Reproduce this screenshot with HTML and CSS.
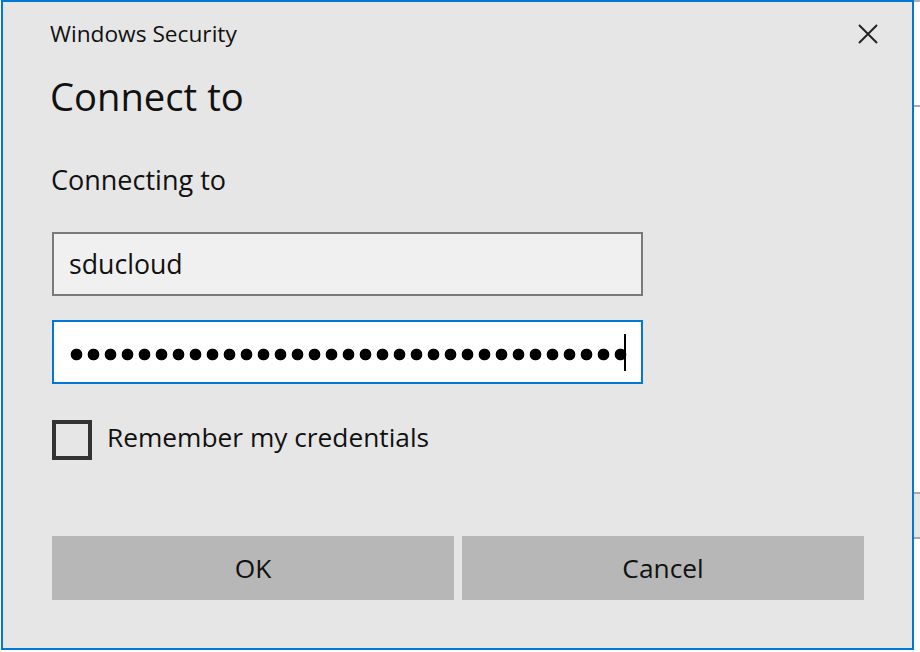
FILE: index.html
```html
<!DOCTYPE html>
<html lang="en">
<head>
<meta charset="utf-8">
<title>Windows Security</title>
<link rel="stylesheet" href="styles.css">
</head>
<body>
<div class="dialog">
  <div class="titlebar">
    <span class="title">Windows Security</span>
    <button class="close" aria-label="Close">
      <svg width="20" height="20" viewBox="0 0 20 20"><path d="M1 1L19 19M19 1L1 19" stroke="#222" stroke-width="2" fill="none"/></svg>
    </button>
  </div>
  <h1 class="heading">Connect to</h1>
  <p class="label">Connecting to</p>
  <div class="field">sducloud</div>
  <div class="field focused"><span class="dots" aria-label="password"></span><span class="caret"></span></div>
  <div class="check"><span class="box"></span><span class="check-text">Remember my credentials</span></div>
  <div class="buttons">
    <button class="btn">OK</button>
    <button class="btn">Cancel</button>
  </div>
</div>
</body>
</html>
```
FILE: styles.css
```css
html, body {
  margin: 0;
  padding: 0;
}
body {
  width: 920px;
  height: 652px;
  overflow: hidden;
  background:
    linear-gradient(#a9a9a9, #a9a9a9) 914px 105px / 6px 2px no-repeat,
    linear-gradient(#a9a9a9, #a9a9a9) 914px 492px / 6px 2px no-repeat,
    linear-gradient(#a9a9a9, #a9a9a9) 914px 537px / 6px 2px no-repeat,
    linear-gradient(#e6e6e6, #e6e6e6) 914px 494px / 6px 43px no-repeat,
    linear-gradient(#b0b0b0, #b0b0b0) 914px 0 / 6px 2px no-repeat,
    #ffffff;
  font-family: "Open Sans", "Noto Sans", sans-serif;
  color: #000;
}
.dialog {
  box-sizing: border-box;
  margin-left: 1px;
  width: 913px;
  height: 650px;
  border: 2px solid #0078d7;
  background: #e6e6e6;
  padding: 0 48px 48px 49px;
  display: flex;
  flex-direction: column;
}
.titlebar {
  margin-top: 12px;
  height: 40px;
  display: flex;
  align-items: center;
  justify-content: space-between;
}
.title {
  font-size: 22.7px;
  line-height: 40px;
  margin-left: -2px;
  color: #111;
}
.close {
  width: 40px;
  height: 40px;
  margin-right: -24px;
  padding: 0;
  border: 0;
  background: transparent;
  display: flex;
  align-items: center;
  justify-content: center;
}
.heading {
  margin: 18px 0 0 -2px;
  font-size: 38.2px;
  font-weight: 400;
  line-height: 48px;
  color: #111;
}
.label {
  margin: 42px 0 0 -1px;
  font-size: 27px;
  line-height: 36px;
  color: #111;
}
.field {
  box-sizing: border-box;
  margin-top: 34px;
  width: 591px;
  height: 64px;
  border: 2px solid #7a7a7a;
  background: #f0f0f0;
  padding-left: 15px;
  font-size: 26.7px;
  line-height: 58px;
  display: flex;
  align-items: center;
  color: #111;
}
.field.focused {
  margin-top: 24px;
  border-color: #0078d7;
  background: #ffffff;
  padding-left: 14px;
}
.dots {
  width: 561px;
  height: 17px;
  background: radial-gradient(circle at 8.5px 8.5px, #000 5.5px, transparent 6.2px) 0 0 / 17px 17px repeat-x;
  margin-top: 4px;
}
.caret {
  width: 2px;
  height: 37px;
  background: #000;
  margin-left: -5px;
}
.check {
  margin-top: 36px;
  height: 40px;
  display: flex;
  align-items: flex-start;
}
.box {
  box-sizing: border-box;
  width: 40px;
  height: 40px;
  border: 4px solid #333;
  flex: none;
}
.check-text {
  margin-left: 15px;
  font-size: 26.3px;
  line-height: 34px;
  color: #111;
}
.buttons {
  margin-top: 76px;
  display: flex;
  gap: 8px;
}
.btn {
  width: 402px;
  height: 64px;
  border: 0;
  padding: 0;
  background: #b7b7b7;
  font-family: "Open Sans", "Noto Sans", sans-serif;
  font-size: 26.3px;
  color: #111;
}
```
